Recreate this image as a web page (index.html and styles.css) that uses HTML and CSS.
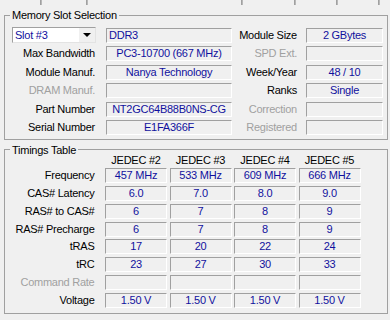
FILE: index.html
```html
<!DOCTYPE html>
<html lang="en">
<head>
    <meta charset="UTF-8">
    <title>CPU-Z SPD</title>
    <link rel="stylesheet" href="styles.css">
</head>
<body>
    <div class="tabs">
        <div class="tab" style="width: 41px"></div>
        <div class="tab" style="width: 46px"></div>
        <div class="tab" style="width: 155px"></div>
        <div class="tab" style="width: 53px"></div>
        <div class="tab" style="width: 42px"></div>
        <div class="tab" style="width: 42px"></div>
        <div class="tab last"></div>
    </div>

    <fieldset class="group slots">
        <legend>Memory Slot Selection</legend>
        <div class="slot-grid">
            <div class="combo">
                <span class="combo-text">Slot #3</span>
                <span class="combo-btn"><span class="arrow"></span></span>
            </div>
            <div class="field left">DDR3</div>
            <div class="label">Module Size</div>
            <div class="field">2 GBytes</div>

            <div class="label">Max Bandwidth</div>
            <div class="field">PC3-10700 (667 MHz)</div>
            <div class="label off">SPD Ext.</div>
            <div class="field"></div>

            <div class="label">Module Manuf.</div>
            <div class="field">Nanya Technology</div>
            <div class="label">Week/Year</div>
            <div class="field">48 / 10</div>

            <div class="label off">DRAM Manuf.</div>
            <div class="field"></div>
            <div class="label">Ranks</div>
            <div class="field">Single</div>

            <div class="label">Part Number</div>
            <div class="field">NT2GC64B88B0NS-CG</div>
            <div class="label off">Correction</div>
            <div class="field"></div>

            <div class="label">Serial Number</div>
            <div class="field">E1FA366F</div>
            <div class="label off">Registered</div>
            <div class="field"></div>
        </div>
    </fieldset>

    <fieldset class="group timings">
        <legend>Timings Table</legend>
        <div class="timing-head">
            <div></div>
            <div>JEDEC #2</div>
            <div>JEDEC #3</div>
            <div>JEDEC #4</div>
            <div>JEDEC #5</div>
        </div>
        <div class="timing-grid">
            <div class="label">Frequency</div>
            <div class="field">457 MHz</div>
            <div class="field">533 MHz</div>
            <div class="field">609 MHz</div>
            <div class="field">666 MHz</div>

            <div class="label">CAS# Latency</div>
            <div class="field">6.0</div>
            <div class="field">7.0</div>
            <div class="field">8.0</div>
            <div class="field">9.0</div>

            <div class="label">RAS# to CAS#</div>
            <div class="field">6</div>
            <div class="field">7</div>
            <div class="field">8</div>
            <div class="field">9</div>

            <div class="label">RAS# Precharge</div>
            <div class="field">6</div>
            <div class="field">7</div>
            <div class="field">8</div>
            <div class="field">9</div>

            <div class="label">tRAS</div>
            <div class="field">17</div>
            <div class="field">20</div>
            <div class="field">22</div>
            <div class="field">24</div>

            <div class="label">tRC</div>
            <div class="field">23</div>
            <div class="field">27</div>
            <div class="field">30</div>
            <div class="field">33</div>

            <div class="label off">Command Rate</div>
            <div class="field"></div>
            <div class="field"></div>
            <div class="field"></div>
            <div class="field"></div>

            <div class="label">Voltage</div>
            <div class="field">1.50 V</div>
            <div class="field">1.50 V</div>
            <div class="field">1.50 V</div>
            <div class="field">1.50 V</div>
        </div>
    </fieldset>
</body>
</html>
```

FILE: styles.css
```css
body {
    margin: 0;
    background: #f0f0f0;
    font-family: 'Liberation Sans', Arial, sans-serif;
    font-size: 11px;
    letter-spacing: -0.25px;
    color: #000;
    width: 390px;
    height: 320px;
    overflow: hidden;
}

.tabs {
    display: flex;
    height: 5px;
}

.tab {
    height: 5px;
    border-right: 1px solid #a0a0a0;
    border-left: 1px solid #b8b8b8;
    box-sizing: border-box;
}

.tab:first-child {
    border-left: none;
}

.tab.last {
    flex: 1;
    border-right: none;
}

.group {
    margin: 0 0 0 4px;
    width: 384px;
    box-sizing: border-box;
    border: 1px solid #a0a0a0;
    padding: 0 7px;
    min-inline-size: 0;
}

.group legend {
    padding: 0 2px;
    margin-left: -2px;
}

.slots {
    margin-top: 4px;
    padding-top: 7px;
    padding-bottom: 4px;
}

.slots legend {
    line-height: 12px;
}

.timings {
    margin-top: 5px;
    padding-bottom: 5px;
}

.timings legend {
    line-height: 10px;
}

.slot-grid {
    display: grid;
    grid-template-columns: 94px 126px 74px 77px;
    grid-auto-rows: 15px;
    row-gap: 3.4px;
}

.label {
    line-height: 15px;
    text-align: right;
    white-space: nowrap;
    padding-right: 11px;
}

.slot-grid .label:nth-child(4n+3) {
    padding-right: 9px;
}

.label.off {
    color: #a0a0a0;
}

.field {
    height: 15px;
    box-sizing: border-box;
    border: 1px solid;
    border-color: #a0a0a0 #fff #fff #a0a0a0;
    line-height: 13px;
    text-align: center;
    color: #10109e;
    white-space: nowrap;
    overflow: hidden;
}

.field.left {
    text-align: left;
    padding-left: 2px;
}

.combo {
    width: 84px;
    height: 16px;
    margin-top: -1px;
    box-sizing: border-box;
    background: #fff;
    border: 1px solid;
    border-color: #a0a0a0 #e3e3e3 #e3e3e3 #a0a0a0;
    display: flex;
}

.combo-text {
    flex: 1;
    padding-left: 2px;
    line-height: 14px;
    color: #10109e;
}

.combo-btn {
    width: 16px;
    background: #f0f0f0;
    border-left: 1px solid #fff;
    display: flex;
    align-items: center;
    justify-content: center;
}

.arrow {
    width: 0;
    height: 0;
    border-left: 4px solid transparent;
    border-right: 4px solid transparent;
    border-top: 4px solid #000;
}

.timing-head,
.timing-grid {
    display: grid;
    grid-template-columns: 90.5px repeat(4, 62px);
    column-gap: 2.5px;
}

.timing-head {
    line-height: 11px;
    padding-bottom: 2px;
    text-align: center;
}

.timing-grid {
    grid-auto-rows: 15px;
    row-gap: 2.86px;
}

.timing-grid .label {
    padding-right: 8px;
}
```
